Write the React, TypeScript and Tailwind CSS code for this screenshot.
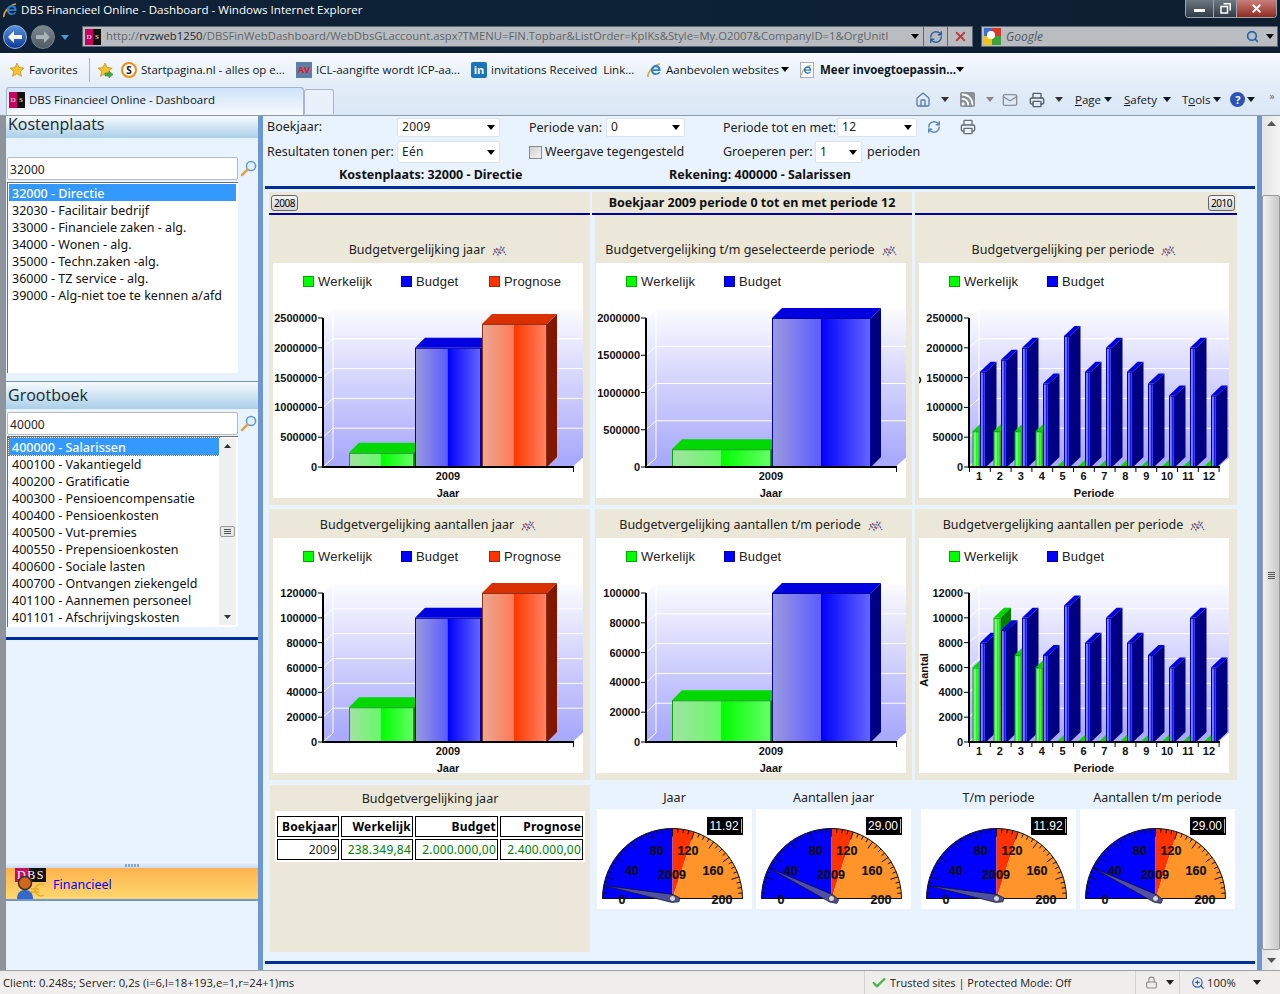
import { Home, Rss, Mail, Printer, Search, Check, Lock, ZoomIn, RefreshCw, X } from 'lucide-react'

const Caret = ({ className = 'text-black' }: { className?: string }) => (
  <svg width="8" height="5" viewBox="0 0 8 5" className={`shrink-0 ${className}`}>
    <path d="M0 0h8L4 5z" fill="currentColor" />
  </svg>
)

const Star = ({ className = '', arrow }: { className?: string; arrow?: boolean }) => (
  <svg width="16" height="16" viewBox="0 0 16 16" className={`shrink-0 ${className}`}>
    <path d="M8 1l2.100 4.600 5 .5-3.800 3.300 1.200 5L8 11.700l-4.500 2.700 1.200-5L.9 6.100l5-.5z" fill="#f6c32c" stroke="#c98a10" strokeWidth=".7" />
    {arrow && <path d="M8 11h4V9l4 3.500L12 16v-2H8z" fill="#3fae3f" stroke="#1f7a1f" strokeWidth=".5" />}
  </svg>
)

const IeIcon = ({ size = 16 }: { size?: number }) => (
  <svg width={size} height={size} viewBox="0 0 16 16" className="shrink-0">
    <path d="M1 15C0 12 5 3 13 2" fill="none" stroke="#e8a620" strokeWidth="1.600" />
    <path d="M13.500 9H6.200c.3 2.400 3.800 3 5.600 1h1.500c-1.500 4-8.500 4.500-9.300-1-.6-4.500 4.500-7.500 7.800-5 1.600 1.200 1.900 3 1.700 5zM6.300 7.300h5c0-2.500-4.400-2.700-5 0z" fill="#2a7fd0" />
  </svg>
)

const DbsIcon = () => (
  <div className="flex h-[16px] w-[16px] shrink-0 overflow-hidden font-['Liberation_Serif',serif] text-[7px] leading-[16px] text-white">
    <span className="w-[8px] bg-[#c8005f] text-center">D</span>
    <span className="w-[8px] bg-[#111] text-center">S</span>
  </div>
)

const WindowButtons = () => (
  <div className="flex h-[18px] w-[92px] overflow-hidden rounded-b-[4px] border border-t-0 border-[#9aa4ad]">
    <div className="flex w-[27px] items-end justify-center bg-gradient-to-b from-[#6d7882] to-[#323c46] pb-[5px]">
      <div className="h-[3px] w-[11px] bg-white" />
    </div>
    <div className="flex w-[24px] items-center justify-center border-x border-[#9aa4ad] bg-gradient-to-b from-[#6d7882] to-[#323c46]">
      <svg width="11" height="11" viewBox="0 0 11 11">
        <path d="M3.500.8h6.700v6.700M1 3.500h6.500V10H1z" fill="none" stroke="#fff" strokeWidth="1.500" />
      </svg>
    </div>
    <div className="flex flex-1 items-center justify-center bg-gradient-to-b from-[#c9807a] to-[#8f2a1f]">
      <X size={13} strokeWidth={3.500} className="text-white" />
    </div>
  </div>
)

const TitleBar = () => (
  <div className="flex h-[53px] shrink-0 flex-col bg-gradient-to-r from-[#0f2136] via-[#0d2236] to-[#0e1e30] font-['Open_Sans',sans-serif]">
    <div className="flex h-[26px] items-start">
      <div className="ml-[3px] mt-[2px]">
        <IeIcon />
      </div>
      <span className="ml-[2px] mt-[1px] text-[11.600px] leading-[18px] text-white">DBS Financieel Online - Dashboard - Windows Internet Explorer</span>
      <div className="ml-auto mr-[3px]">
        <WindowButtons />
      </div>
    </div>
    <div className="flex h-[27px] items-start">
      <div className="ml-[3px] mt-[-1px] flex h-[24px] w-[24px] items-center justify-center rounded-full border border-[#8fb6dc] bg-gradient-to-b from-[#5a90d8] to-[#10399a]">
        <svg width="14" height="12" viewBox="0 0 14 12">
          <path d="M6 0L0 6l6 6V8h8V4H6z" fill="#fff" />
        </svg>
      </div>
      <div className="ml-[4px] mt-[-1px] flex h-[24px] w-[24px] items-center justify-center rounded-full border border-[#77818a] bg-gradient-to-b from-[#7d8993] to-[#4e5962]">
        <svg width="14" height="12" viewBox="0 0 14 12">
          <path d="M8 0l6 6-6 6V8H0V4h8z" fill="#aab2b9" />
        </svg>
      </div>
      <div className="ml-[6px] mt-[9px]">
        <Caret className="text-[#4a9ad8]" />
      </div>
      <div className="ml-[13px] flex h-[21px] w-[842px] items-center border border-[#5d6872] bg-[#b9bdc1] pl-[2px] text-[11.300px]">
        <DbsIcon />
        <span className="ml-[5px] whitespace-nowrap text-[#5f6468]">
          http://<span className="text-[#24282c]">rvzweb1250</span>/DBSFinWebDashboard/WebDbsGLaccount.aspx?TMENU=FIN.Topbar&ListOrder=KplKs&Style=My.O2007&CompanyID=1&OrgUnitI
        </span>
        <div className="ml-auto mr-[4px]">
          <Caret />
        </div>
      </div>
      <div className="flex h-[21px] w-[24px] items-center justify-center border-y border-r border-[#5d6872] bg-[#b9bdc1]">
        <RefreshCw size={14} strokeWidth={2.500} className="text-[#27619e]" />
      </div>
      <div className="flex h-[21px] w-[25px] items-center justify-center border-y border-r border-[#5d6872] bg-[#b9bdc1]">
        <X size={15} strokeWidth={3} className="text-[#b8403a]" />
      </div>
      <div className="ml-[8px] flex h-[21px] w-[297px] items-center border border-[#5d6872] bg-[#b9bdc1] pl-[2px]">
        <svg width="17" height="17" viewBox="0 0 17 17" className="shrink-0">
          <rect width="8" height="8" fill="#3b6fd6" />
          <rect x="8" width="9" height="8" fill="#d83a2a" />
          <rect y="8" width="8" height="9" fill="#f2c316" />
          <rect x="8" y="8" width="9" height="9" fill="#3ca33c" />
          <circle cx="7" cy="7" r="4" fill="#fff" />
        </svg>
        <span className="ml-[5px] text-[12px] italic text-[#50565b]">Google</span>
        <Search size={13} strokeWidth={3} className="ml-auto text-[#1f62ab]" />
        <div className="ml-[7px] mr-[3px]">
          <Caret />
        </div>
      </div>
    </div>
  </div>
)

const FavBar = () => (
  <div className="flex h-[32px] shrink-0 items-center bg-gradient-to-b from-[#f7fafe] to-[#e3edf9] pt-[1px] font-['Open_Sans',sans-serif] text-[11.500px] text-[#101820]">
    <div className="ml-[9px] flex w-[72px] items-center gap-[4px]">
      <Star />
      <span>Favorites</span>
    </div>
    <div className="ml-[8px] h-[24px] w-px bg-[#a9b4c0]" />
    <Star className="ml-[7px]" arrow />
    <div className="ml-[8px] flex h-[16px] w-[16px] shrink-0 items-center justify-center rounded-full border-2 border-[#f08a10] bg-white text-[10px] font-bold leading-none">S</div>
    <span className="ml-[4px] w-[147px] whitespace-nowrap">Startpagina.nl - alles op e...</span>
    <div className="ml-[8px] flex h-[16px] w-[16px] shrink-0 items-center justify-center bg-[#5c7fa8] text-[9px] font-bold leading-none text-[#e81818]">AV</div>
    <span className="ml-[4px] w-[150px] whitespace-nowrap">ICL-aangifte wordt ICP-aa...</span>
    <div className="ml-[5px] flex h-[16px] w-[16px] shrink-0 items-center justify-center rounded-[2px] bg-[#1b74b8] text-[11px] font-bold leading-none text-white">in</div>
    <span className="ml-[4px] w-[156px] whitespace-nowrap">invitations Received&nbsp; Link...</span>
    <IeIcon />
    <span className="ml-[3px] w-[115px] whitespace-nowrap">Aanbevolen websites</span>
    <Caret />
    <div className="ml-[11px] flex h-[16px] w-[14px] shrink-0 items-center justify-center border border-[#aab] bg-white">
      <IeIcon size={12} />
    </div>
    <span className="ml-[6px] w-[136px] whitespace-nowrap font-bold">Meer invoegtoepassin...</span>
    <Caret />
  </div>
)

const TabBar = () => (
  <div className="flex h-[31px] shrink-0 items-start border-b border-[#8f99a6] bg-gradient-to-b from-[#e3edf9] to-[#dbe7f6] pt-[2px] font-['Open_Sans',sans-serif] text-[11.500px] text-[#101820]">
    <div className="ml-[6px] flex h-[28px] w-[298px] items-center gap-[4px] rounded-t-[3px] border border-b-0 border-[#aab6c4] bg-gradient-to-b from-[#cfe3fa] to-[#f6faff] pb-[4px] pl-[2px]">
      <DbsIcon />
      <span>DBS Financieel Online - Dashboard</span>
    </div>
    <div className="mt-[2px] h-[25px] w-[30px] rounded-t-[3px] border border-b-0 border-[#aab6c4] bg-[#e9f1fb]" />
    <div className="ml-[581px] flex h-[25px] items-center">
      <Home size={16} className="text-[#5a7da6]" />
      <Caret className="ml-[10px] text-[#333]" />
      <Rss size={15} strokeWidth={3} className="ml-[11px] rounded-[2px] bg-[#8a8f95] text-white" />
      <Caret className="ml-[11px] text-[#888]" />
      <Mail size={16} className="ml-[8px] text-[#8a8f95]" />
      <Printer size={16} className="ml-[11px] text-[#555c63]" />
      <Caret className="ml-[10px] text-[#333]" />
      <span className="ml-[12px]"><u>P</u>age</span>
      <Caret className="ml-[3px]" />
      <span className="ml-[12px]"><u>S</u>afety</span>
      <Caret className="ml-[6px]" />
      <span className="ml-[11px]">T<u>o</u>ols</span>
      <Caret className="ml-[3px]" />
      <div className="ml-[9px] flex h-[15px] w-[15px] items-center justify-center rounded-full bg-[#2a52b8] text-[11px] font-bold leading-none text-white">?</div>
      <Caret className="ml-[2px]" />
      <span className="mb-[8px] ml-[14px] text-[10px] leading-none text-[#567]">»</span>
    </div>
  </div>
)

const Magnifier = () => (
  <svg width="17" height="17" viewBox="0 0 17 17" className="shrink-0">
    <circle cx="11" cy="6" r="4.600" fill="#e3effa" stroke="#5a9ad6" strokeWidth="1.500" />
    <path d="M7.500 9.500L2 15" stroke="#e2a14a" strokeWidth="2.500" strokeLinecap="round" />
  </svg>
)

const ListScroll = () => (
  <div className="flex h-[187px] w-[17px] flex-col items-center justify-between bg-[#f0f0f0] py-[6px]">
    <svg width="7" height="4" viewBox="0 0 7 4"><path d="M0 4h7L3.500 0z" fill="#333" /></svg>
    <div className="flex h-[11px] w-[15px] flex-col justify-center gap-px rounded-[2px] border border-[#999] bg-[#e8e8e8] px-[3px]">
      <div className="h-px bg-[#555]" />
      <div className="h-px bg-[#555]" />
      <div className="h-px bg-[#555]" />
    </div>
    <svg width="7" height="4" viewBox="0 0 7 4"><path d="M0 0h7L3.500 4z" fill="#333" /></svg>
  </div>
)

const ListBox = ({ items, scroll }: { items: string[]; scroll?: boolean }) => (
  <div className="flex h-[191px] w-[231px] border-l border-t border-[#707070] bg-white pl-[1px] pr-[2px] pt-[1px]">
    <div className="min-w-0 flex-1">
      {items.map((item, i) => (
        <div
          key={item}
          className={`h-[17px] whitespace-nowrap pl-[3px] text-[12.500px] leading-[19px] ${i === 0 ? 'bg-[#3399ff] font-medium text-white' : 'text-[#111]'} ${i === 0 && scroll ? 'outline-1 outline-dotted outline-[#9a6a20]' : ''}`}
        >
          {item}
        </div>
      ))}
    </div>
    {scroll && <ListScroll />}
  </div>
)

const SearchInput = ({ value }: { value: string }) => (
  <div className="flex items-center gap-[2px]">
    <div className="h-[23px] w-[231px] rounded-[2px] border border-[#b5bac6] bg-white pl-[2px] text-[12px] leading-[23px] tracking-[0.1px] text-[#222]">{value}</div>
    <Magnifier />
  </div>
)

const PaneHeader = ({ title, className }: { title: string; className: string }) => (
  <div className={`bg-gradient-to-b from-[#f7fbfe] to-[#aacfe8] pl-[2px] font-['Open_Sans',sans-serif] text-[16px] text-[#20282e] ${className}`}>{title}</div>
)

const costCenters = [
  '32000 - Directie',
  '32030 - Facilitair bedrijf',
  '33000 - Financiele zaken - alg.',
  '34000 - Wonen - alg.',
  '35000 - Techn.zaken -alg.',
  '36000 - TZ service - alg.',
  '39000 - Alg-niet toe te kennen a/afd',
]

const ledgers = [
  '400000 - Salarissen',
  '400100 - Vakantiegeld',
  '400200 - Gratificatie',
  '400300 - Pensioencompensatie',
  '400400 - Pensioenkosten',
  '400500 - Vut-premies',
  '400550 - Prepensioenkosten',
  '400600 - Sociale lasten',
  '400700 - Ontvangen ziekengeld',
  '401100 - Aannemen personeel',
  '401101 - Afschrijvingskosten',
]

const Sidebar = () => (
  <div className="flex w-[259px] shrink-0 border-l-[5px] border-[#8e949b]">
    <div className="flex w-[254px] flex-col border-x border-[#6d96d2] bg-[#e9f3fd]">
      <PaneHeader title="Kostenplaats" className="h-[22px] leading-[17px]" />
      <div className="mt-[19px] pl-[1px]">
        <SearchInput value="32000" />
      </div>
      <div className="mt-[2px] pl-[1px]">
        <ListBox items={costCenters} />
      </div>
      <div className="mt-[8px] h-px bg-[#6d96d2]" />
      <PaneHeader title="Grootboek" className="h-[27px] leading-[27px]" />
      <div className="mt-[3px] pl-[1px]">
        <SearchInput value="40000" />
      </div>
      <div className="mt-px pl-[1px]">
        <ListBox items={ledgers} scroll />
      </div>
      <div className="mt-[10px] h-[3px] bg-[#002f9c]" />
      <div className="mt-[222px] flex h-[6px] items-center justify-center gap-px bg-gradient-to-b from-[#f1f7fd] to-[#c8daf2]">
        {[0, 1, 2, 3, 4].map((d) => (
          <div key={d} className="h-[3px] w-[2px] bg-[#8aa6cc]" />
        ))}
      </div>
      <div className="flex h-[33px] items-center border-b-2 border-[#6d96d2] bg-gradient-to-b from-[#fdb24d] to-[#ffd76e]">
        <svg width="32" height="31" viewBox="0 0 32 31" className="ml-[8px] shrink-0">
          <rect x="1" y="0" width="31" height="14" fill="#111" />
          <rect x="1" y="0" width="14" height="14" fill="#c0105f" />
          <text x="3" y="11" fontSize="12" fontFamily="Liberation Serif" fill="#fff" letterSpacing="1.500">DBS</text>
          <path d="M30 17a6 6 0 0 0-9 5 6 6 0 0 0 9 5M17 21h8M17 24h8" fill="none" stroke="#e6ac1a" strokeWidth="1.300" />
          <path d="M3 31c0-7 4-9 8-9s8 2 8 9z" fill="#3468c8" />
          <circle cx="11" cy="15" r="6.500" fill="#d2661a" stroke="#333" strokeWidth="1.500" />
        </svg>
        <span className="ml-[7px] pt-[4px] text-[12.500px] text-[#0000ff]">Financieel</span>
      </div>
    </div>
  </div>
)

const Select = ({ value, className }: { value: string; className: string }) => (
  <div className={`flex items-center justify-between rounded-[2px] border border-[#dbe3ec] bg-white px-[4px] text-[12px] tracking-[0.3px] ${className}`}>
    <span>{value}</span>
    <Caret />
  </div>
)

const Filters = () => (
  <div className="pl-[2px] pt-[1px] text-[12.500px] text-[#222]">
    <div className="flex h-[20px] items-center">
      <span className="ml-[2px] w-[130px]">Boekjaar:</span>
      <Select value="2009" className="h-[19px] w-[103px]" />
      <span className="ml-[29px] mt-[2px] w-[77px]">Periode van:</span>
      <Select value="0" className="h-[19px] w-[79px]" />
      <span className="ml-[38px] mt-[2px] w-[114px]">Periode tot en met:</span>
      <Select value="12" className="h-[19px] w-[80px]" />
      <RefreshCw size={14} strokeWidth={2.500} className="ml-[10px] text-[#5c88b8]" />
      <Printer size={16} className="ml-[19px] text-[#666e76]" />
    </div>
    <div className="mt-[4px] flex h-[22px] items-center">
      <span className="ml-[2px] w-[130px]">Resultaten tonen per:</span>
      <Select value="Eén" className="h-[22px] w-[103px]" />
      <div className="ml-[29px] h-[13px] w-[13px] border border-[#8a8a8a] bg-gradient-to-br from-[#d0d0d0] to-[#f4f4f4]" />
      <span className="ml-[3px] w-[178px]">Weergave tegengesteld</span>
      <span className="w-[92px]">Groeperen per:</span>
      <Select value="1" className="h-[22px] w-[47px]" />
      <span className="ml-[5px]">perioden</span>
    </div>
    <div className="mt-[3px] flex h-[18px] items-center font-bold text-[#111]">
      <span className="ml-[74px] w-[330px]">Kostenplaats: 32000 - Directie</span>
      <span>Rekening: 400000 - Salarissen</span>
    </div>
  </div>
)

type BarColor = 'green' | 'blue' | 'red'

const barColors: Record<BarColor, { top: string; side: string; edge: string }> = {
  green: { top: '#00d800', side: '#008000', edge: '#00a800' },
  blue: { top: '#0000e0', side: '#000080', edge: '#0000a0' },
  red: { top: '#d83000', side: '#801800', edge: '#903018' },
}

const Defs = () => (
  <svg width="0" height="0" className="absolute">
    <defs>
      <linearGradient id="wall" x1="0" y1="0" x2="0" y2="1">
        <stop offset="0" stopColor="#fbfbff" />
        <stop offset="1" stopColor="#aaaafc" />
      </linearGradient>
      <linearGradient id="bar-green">
        <stop offset="0" stopColor="#a2e2a2" />
        <stop offset=".49" stopColor="#66fa66" />
        <stop offset=".5" stopColor="#00ff00" />
        <stop offset="1" stopColor="#66ff66" />
      </linearGradient>
      <linearGradient id="bar-blue">
        <stop offset="0" stopColor="#9a9ade" />
        <stop offset=".49" stopColor="#5c5cff" />
        <stop offset=".5" stopColor="#0000ff" />
        <stop offset="1" stopColor="#6666ff" />
      </linearGradient>
      <linearGradient id="bar-red">
        <stop offset="0" stopColor="#eaa890" />
        <stop offset=".49" stopColor="#ff7a58" />
        <stop offset=".5" stopColor="#ff3800" />
        <stop offset="1" stopColor="#ff8464" />
      </linearGradient>
    </defs>
  </svg>
)

const BASE = 204
const PLOT = 149

const Bar = ({ x, w, h, color, dx = 10, dy = 10 }: { x: number; w: number; h: number; color: BarColor; dx?: number; dy?: number }) => {
  const c = barColors[color]
  const y = BASE - h
  return (
    <g>
      <polygon points={`${x},${y} ${x + dx},${y - dy} ${x + w + dx},${y - dy} ${x + w},${y}`} fill={c.top} />
      <polygon points={`${x + w},${y} ${x + w + dx},${y - dy} ${x + w + dx},${BASE - dy} ${x + w},${BASE}`} fill={c.side} />
      {h > 0 && <rect x={x + 0.5} y={y + 0.5} width={w - 1} height={h - 1} fill={`url(#bar-${color})`} stroke={c.edge} />}
    </g>
  )
}

type Chart3DProps = {
  max: number
  step: number
  xTitle: string
  legend: BarColor[]
  bars?: { color: BarColor; value: number; x: number; w: number }[]
  periods?: { green: number[]; blue: number[] }
  yLabel?: string
  cutMark?: boolean
}

const names: Record<BarColor, string> = { green: 'Werkelijk', blue: 'Budget', red: 'Prognose' }
const swatch: Record<BarColor, string> = { green: '#00ff00', blue: '#0000ff', red: '#ff3300' }

const Chart3D = ({ max, step, xTitle, legend, bars, periods, yLabel, cutMark }: Chart3DProps) => {
  const ticks: number[] = []
  for (let v = 0; v <= max; v += step) ticks.push(v)
  const scale = (v: number) => (v / max) * PLOT
  return (
    <svg width="310" height="235" viewBox="0 0 310 235" className="block bg-white">
      {legend.map((c, i) => (
        <g key={c}>
          <rect x={30.500 + i * 98 - (i === 2 ? 10 : 0)} y="13.500" width="10" height="10" fill={swatch[c]} stroke={barColors[c].edge} />
          <text x={45 + i * 98 - (i === 2 ? 10 : 0)} y="23" fontFamily="Liberation Sans" fontSize="13" letterSpacing=".2" fill="#222">{names[c]}</text>
        </g>
      ))}
      <polygon points={`50,55 60,46 60,195 50,204`} fill="url(#wall)" />
      <rect x="60" y="46" width="250" height="149" fill="url(#wall)" />
      <polygon points={`50,204 60,195 310,195 300,204`} fill="#aaaafc" />
      {ticks.map((v) => {
        const y = BASE - scale(v)
        return (
          <g key={v}>
            {v > 0 && <line x1="60" y1={y - 9} x2="310" y2={y - 9} stroke="#fff" />}
            <line x1="50" y1={y} x2="60" y2={y - 9} stroke="#fff" />
          </g>
        )
      })}
      <line x1="60" y1="46" x2="60" y2="195" stroke="#fff" />
      <line x1="300" y1="204" x2="310" y2="195" stroke="#fff" />
      {bars && bars.map((b) => <Bar key={b.color} x={b.x} w={b.w} h={scale(b.value)} color={b.color} />)}
      {periods &&
        periods.blue.map((v, i) => (
          <g key={i}>
            <Bar x={53.500 + i * 21} w={7} h={scale(periods.green[i] ?? 0)} color="green" dx={10.500} />
            <Bar x={61 + i * 21} w={6} h={scale(v)} color="blue" dx={10.500} />
          </g>
        ))}
      <rect x="49" y="55" width="2" height="150" fill="#000" />
      <rect x="49" y="203" width="252" height="2" fill="#000" />
      {ticks.map((v) => (
        <g key={v}>
          <line x1="45" y1={BASE - scale(v)} x2="50" y2={BASE - scale(v)} stroke="#000" />
          <text x="44" y={BASE - scale(v) + 4} textAnchor="end" fontFamily="Liberation Sans" fontWeight="700" fontSize="11" fill="#111">{v}</text>
        </g>
      ))}
      {periods ? (
        Array.from({ length: 13 }, (_, i) => <line key={i} x1={50.500 + i * 20.800} y1="204" x2={50.500 + i * 20.800} y2="209" stroke="#000" />)
      ) : (
        <line x1="300.500" y1="204" x2="300.500" y2="209" stroke="#000" />
      )}
      {periods ? (
        periods.blue.map((_, i) => (
          <text key={i} x={60 + i * 20.900} y="217" textAnchor="middle" fontFamily="Liberation Sans" fontWeight="700" fontSize="11" fill="#111">{i + 1}</text>
        ))
      ) : (
        <text x="175" y="217" textAnchor="middle" fontFamily="Liberation Sans" fontWeight="700" fontSize="11" fill="#111">2009</text>
      )}
      <text x="175" y="234" textAnchor="middle" fontFamily="Liberation Sans" fontWeight="700" fontSize="11" fill="#111">{xTitle}</text>
      {yLabel && (
        <text transform="translate(8.500 132) rotate(-90)" textAnchor="middle" fontFamily="Liberation Sans" fontWeight="700" fontSize="11" fill="#111">{yLabel}</text>
      )}
      {cutMark && <path d="M0 114q3 3 0 6" fill="none" stroke="#111" strokeWidth="1.500" />}
    </svg>
  )
}

const TitleIcon = () => (
  <svg width="15" height="14" viewBox="0 0 15 14" className="mb-[2px] shrink-0">
    <path d="M1 11L5 4l3 6 5-8" fill="none" stroke="#d04030" strokeWidth="1.300" strokeDasharray="2 1" />
    <path d="M2 5l4 6 3-8 5 8" fill="none" stroke="#3070d0" strokeWidth="1.300" strokeDasharray="2 1" />
  </svg>
)

const ChartCard = ({ title, head, pad, width, ml, children }: { title: string; head: string; pad: string; width: string; ml: string; children: React.ReactNode }) => (
  <div className={`${width} ${ml} ${pad} bg-[#ebe8d9]`}>
    <div className={`flex w-[310px] items-end justify-center gap-[7px] pb-[3px] text-[12.500px] text-[#222] ${head}`}>
      <span>{title}</span>
      <TitleIcon />
    </div>
    {children}
  </div>
)

const gaugeLabels: [string, number, number][] = [
  ['0', 25, 94.500],
  ['40', 35, 65.500],
  ['80', 60, 46],
  ['120', 91, 46],
  ['160', 116, 65.500],
  ['200', 125, 94.500],
]

const Gauge = ({ value, label }: { value: number; label: string }) => {
  const cx = 75.500
  const cy = 89.500
  const R = 70
  const pt = (v: number, r: number) => {
    const a = (v / 200) * Math.PI
    return [cx - r * Math.cos(a), cy - r * Math.sin(a)]
  }
  const [rx, ry] = pt(120, R)
  const [tx, ty] = pt(value, R - 1)
  const a = (value / 200) * Math.PI
  const nx = Math.sin(a) * 4
  const ny = -Math.cos(a) * 4
  const bx = Math.cos(a) * 7
  const by = Math.sin(a) * 7
  const ticks = Array.from({ length: 41 }, (_, i) => i * 5)
  return (
    <svg width="155" height="100" viewBox="0 0 155 100" className="block bg-white">
      <path d={`M${cx - R},${cy} A${R},${R} 0 0 1 ${cx},${cy - R} L${cx},${cy} Z`} fill="#0000ff" />
      <path d={`M${cx},${cy} L${cx},${cy - R} A${R},${R} 0 0 1 ${rx},${ry} Z`} fill="#ff3300" />
      <path d={`M${cx},${cy} L${rx},${ry} A${R},${R} 0 0 1 ${cx + R},${cy} Z`} fill="#ff942a" />
      <path d={`M${cx - R},${cy} A${R},${R} 0 0 1 ${cx + R},${cy} Z`} fill="none" stroke="#111" strokeWidth="1" />
      {ticks.map((v) => {
        const [x1, y1] = pt(v, R)
        const [x2, y2] = pt(v, v % 20 === 0 ? R - 8 : R - 4)
        return <line key={v} x1={x1} y1={y1} x2={x2} y2={y2} stroke="#111" />
      })}
      {gaugeLabels.map(([t, x, y]) => (
        <text key={t} x={x} y={y} textAnchor="middle" fontFamily="Liberation Sans" fontWeight="700" fontSize="12.500" fill="#111" stroke="#111" strokeWidth=".2">{t}</text>
      ))}
      <text x="75" y="69.500" textAnchor="middle" fontFamily="Liberation Sans" fontWeight="700" fontSize="12.500" fill="#111" stroke="#111" strokeWidth=".2">2009</text>
      <polygon
        points={`${tx},${ty} ${cx + nx},${cy + ny} ${cx + bx + nx / 2},${cy + by + ny / 2} ${cx + bx - nx / 2},${cy + by - ny / 2} ${cx - nx},${cy - ny}`}
        fill="#4f4fa6"
        stroke="#111"
        strokeWidth=".7"
      />
      <circle cx={cx} cy={cy} r="3" fill="#d8d8d8" stroke="#222" strokeWidth=".7" />
      <rect x="110" y="8" width="36" height="18" fill="#000" />
      <line x1="144.500" y1="10" x2="144.500" y2="24" stroke="#fff" strokeWidth=".7" />
      <text x="127" y="21" textAnchor="middle" fontFamily="Liberation Sans" fontSize="12" fill="#fff">{label}</text>
    </svg>
  )
}

const GaugeBlock = ({ title, value, label, className }: { title: string; value: number; label: string; className?: string }) => (
  <div className={`w-[155px] ${className ?? ''}`}>
    <div className="h-[24px] text-center text-[12.500px] leading-[25px] text-[#222]">{title}</div>
    <Gauge value={value} label={label} />
  </div>
)

const headCell = 'border-[1.500px] border-black px-px text-right text-[12px] font-bold tracking-[0.2px]'
const dataCell = 'border-[1.500px] border-black px-px text-right text-[12px] tracking-[0.2px]'

const Content = () => (
  <div className="flex min-w-0 flex-1 flex-col">
    <Filters />
    <div className="ml-[2px] mt-[2px] h-[3px] w-[990px] bg-[#002f9c]" />
    <div className="ml-[6px] mt-[3px] flex h-[23px] text-[12.500px]">
      <div className="flex w-[321px] items-center border-b-2 border-[#000099] bg-[#ebe8d9] pl-[2px]">
        <div className="rounded-[3px] border border-[#666] bg-gradient-to-b from-[#f4f4f4] to-[#d6d6d6] px-[2px] text-[10px] leading-[14px] tracking-[-0.5px]">2008</div>
      </div>
      <div className="ml-[2px] flex w-[320px] items-center justify-center border-b-2 border-[#000099] bg-[#ebe8d9] pt-[2px] font-bold text-[#111]">
        Boekjaar 2009 periode 0 tot en met periode 12
      </div>
      <div className="ml-[3px] flex w-[322px] items-center justify-end border-b-2 border-[#000099] bg-[#ebe8d9] pr-[2px]">
        <div className="rounded-[3px] border border-[#666] bg-gradient-to-b from-[#f4f4f4] to-[#d6d6d6] px-[2px] text-[10px] leading-[14px] tracking-[-0.5px]">2010</div>
      </div>
    </div>
    <div className="ml-[6px] flex h-[290px]">
      <ChartCard title="Budgetvergelijking jaar" head="h-[48px]" pad="pl-[4px]" width="w-[321px]" ml="">
        <Chart3D
          max={2500000}
          step={500000}
          xTitle="Jaar"
          legend={['green', 'blue', 'red']}
          bars={[
            { color: 'green', value: 238349, x: 76, w: 65 },
            { color: 'blue', value: 2000000, x: 142, w: 66 },
            { color: 'red', value: 2400000, x: 209, w: 65 },
          ]}
        />
      </ChartCard>
      <ChartCard title="Budgetvergelijking t/m geselecteerde periode" head="h-[48px]" pad="pl-[1px]" width="w-[317px]" ml="ml-[5px]">
        <Chart3D
          max={2000000}
          step={500000}
          xTitle="Jaar"
          legend={['green', 'blue']}
          bars={[
            { color: 'green', value: 238349, x: 76, w: 99 },
            { color: 'blue', value: 2000000, x: 176, w: 99 },
          ]}
        />
      </ChartCard>
      <ChartCard title="Budgetvergelijking per periode" head="h-[48px]" pad="pl-[4px]" width="w-[322px]" ml="ml-[3px]">
        <Chart3D
          max={250000}
          step={50000}
          xTitle="Periode"
          legend={['green', 'blue']}
          cutMark
          periods={{
            green: [60000, 60000, 60000, 60000],
            blue: [160000, 180000, 200000, 140000, 220000, 160000, 200000, 160000, 140000, 120000, 200000, 120000],
          }}
        />
      </ChartCard>
    </div>
    <div className="ml-[6px] mt-[4px] flex h-[271px]">
      <ChartCard title="Budgetvergelijking aantallen jaar" head="h-[29px]" pad="pl-[4px]" width="w-[321px]" ml="">
        <Chart3D
          max={120000}
          step={20000}
          xTitle="Jaar"
          legend={['green', 'blue', 'red']}
          bars={[
            { color: 'green', value: 28000, x: 76, w: 65 },
            { color: 'blue', value: 100000, x: 142, w: 66 },
            { color: 'red', value: 120000, x: 209, w: 65 },
          ]}
        />
      </ChartCard>
      <ChartCard title="Budgetvergelijking aantallen t/m periode" head="h-[29px]" pad="pl-[1px]" width="w-[317px]" ml="ml-[5px]">
        <Chart3D
          max={100000}
          step={20000}
          xTitle="Jaar"
          legend={['green', 'blue']}
          bars={[
            { color: 'green', value: 28000, x: 76, w: 99 },
            { color: 'blue', value: 100000, x: 176, w: 99 },
          ]}
        />
      </ChartCard>
      <ChartCard title="Budgetvergelijking aantallen per periode" head="h-[29px]" pad="pl-[4px]" width="w-[322px]" ml="ml-[3px]">
        <Chart3D
          max={12000}
          step={2000}
          xTitle="Periode"
          legend={['green', 'blue']}
          yLabel="Aantal"
          periods={{
            green: [6000, 10000, 7000, 6000],
            blue: [8000, 9000, 10000, 7000, 11000, 8000, 10000, 8000, 7000, 6000, 10000, 6000],
          }}
        />
      </ChartCard>
    </div>
    <div className="ml-[7px] mt-[5px] flex h-[167px]">
      <div className="w-[320px] bg-[#ebe8d9] px-[5px]">
        <div className="h-[26px] text-center text-[12.500px] leading-[28px] text-[#222]">Budgetvergelijking jaar</div>
        <div className="bg-white pt-[3px] text-[12.500px]">
          <table className="w-[310px] table-fixed border-separate border-spacing-[2px]">
            <colgroup>
              <col className="w-[62px]" />
              <col className="w-[72px]" />
              <col className="w-[83px]" />
              <col className="w-[83px]" />
            </colgroup>
            <tbody>
              <tr className="h-[21px]">
                <td className={headCell}>Boekjaar</td>
                <td className={headCell}>Werkelijk</td>
                <td className={headCell}>Budget</td>
                <td className={headCell}>Prognose</td>
              </tr>
              <tr className="h-[21px]">
                <td className={`${dataCell} text-[#222]`}>2009</td>
                <td className={`${dataCell} text-[#008000]`}>238.349,84</td>
                <td className={`${dataCell} text-[#008000]`}>2.000.000,00</td>
                <td className={`${dataCell} text-[#008000]`}>2.400.000,00</td>
              </tr>
            </tbody>
          </table>
        </div>
      </div>
      <div className="ml-[7px] flex">
        <GaugeBlock title="Jaar" value={11.920} label="11.92" />
        <GaugeBlock title="Aantallen jaar" value={29} label="29.00" className="ml-[4px]" />
        <GaugeBlock title="T/m periode" value={11.920} label="11.92" className="ml-[10px]" />
        <GaugeBlock title="Aantallen t/m periode" value={29} label="29.00" className="ml-[4px]" />
      </div>
    </div>
    <div className="ml-[2px] mt-[9px] h-[3px] w-[990px] bg-[#002f9c]" />
  </div>
)

const PageScroll = () => (
  <div className="flex w-[18px] shrink-0 flex-col bg-gradient-to-r from-[#e4e4e4] to-[#f4f4f4]">
    <div className="flex h-[14px] items-center justify-center">
      <svg width="9" height="5" viewBox="0 0 9 5"><path d="M0 5h9L4.500 0z" fill="#555" /></svg>
    </div>
    <div className="mt-[65px] flex h-[755px] flex-col items-center justify-center gap-px rounded-[2px] border border-[#9a9a9a] bg-gradient-to-r from-[#f2f2f2] to-[#c8c8c8] pt-[6px]">
      <div className="h-px w-[7px] bg-[#555]" />
      <div className="h-px w-[7px] bg-[#555]" />
      <div className="h-px w-[7px] bg-[#555]" />
      <div className="h-px w-[7px] bg-[#555]" />
    </div>
    <div className="flex flex-1 items-center justify-center">
      <svg width="9" height="5" viewBox="0 0 9 5"><path d="M0 0h9L4.500 5z" fill="#555" /></svg>
    </div>
  </div>
)

const StatusBar = () => (
  <div className="flex h-[24px] shrink-0 items-center border-t border-[#a0a0a0] bg-[#f0eeec] font-['Open_Sans',sans-serif] text-[11.300px] text-[#222]">
    <span className="ml-[3px] mt-[2px] w-[861px] whitespace-nowrap">Client: 0.248s; Server: 0,2s (i=6,l=18+193,e=1,r=24+1)ms</span>
    <div className="flex h-full w-[271px] items-center border-l border-[#d4d2d0] pl-[6px]">
      <Check size={16} strokeWidth={3.500} className="text-[#4cb648]" />
      <span className="ml-[3px] mt-[2px] text-[11px]">Trusted sites | Protected Mode: Off</span>
    </div>
    <div className="flex h-full w-[44px] items-center border-l border-[#d4d2d0] pl-[9px]">
      <Lock size={13} className="text-[#8a8a8a]" />
      <Caret className="ml-[8px]" />
    </div>
    <div className="flex h-full flex-1 items-center border-l border-[#d4d2d0] pl-[11px]">
      <ZoomIn size={14} className="text-[#2a5ab8]" />
      <span className="ml-[2px] mt-[2px]">100%</span>
      <Caret className="ml-[17px]" />
    </div>
  </div>
)

const App = () => {
  return (
    <div className="flex h-[994px] w-[1280px] flex-col overflow-hidden bg-[#e9f3fd] font-['Noto_Sans',sans-serif]">
      <Defs />
      <TitleBar />
      <FavBar />
      <TabBar />
      <div className="flex min-h-0 flex-1 bg-[#e9f3fd]">
        <Sidebar />
        <div className="w-[4px] shrink-0 bg-[#6d96d2]" />
        <Content />
        <div className="w-[5px] shrink-0 bg-[#6d96d2]" />
        <PageScroll />
      </div>
      <StatusBar />
    </div>
  )
}

export default App
